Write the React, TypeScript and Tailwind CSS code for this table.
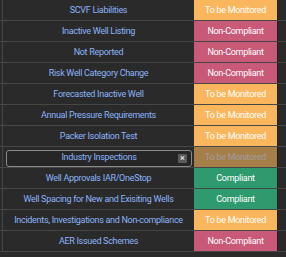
import React from "react";

type Status = "monitor" | "non" | "ok";

const rows: { name: string; status: Status; editing?: boolean }[] = [
    { name: "SCVF Liabilities", status: "monitor" },
    { name: "Inactive Well Listing", status: "non" },
    { name: "Not Reported", status: "non" },
    { name: "Risk Well Category Change", status: "non" },
    { name: "Forecasted Inactive Well", status: "monitor" },
    { name: "Annual Pressure Requirements", status: "monitor" },
    { name: "Packer Isolation Test", status: "monitor" },
    { name: "Industry Inspections", status: "monitor", editing: true },
    { name: "Well Approvals IAR/OneStop", status: "ok" },
    { name: "Well Spacing for New and Exisiting Wells", status: "ok" },
    { name: "Incidents, Investigations and Non-compliance", status: "monitor" },
    { name: "AER Issued Schemes", status: "non" },
];

const labels: Record<Status, string> = {
    monitor: "To be Monitored",
    non: "Non-Compliant",
    ok: "Compliant",
};

const colors: Record<Status, string> = {
    monitor: "bg-[#f9b65c]",
    non: "bg-[#c85a78]",
    ok: "bg-[#2e9a6e]",
};

export default function App() {
    return (
        <div className="w-[286px] h-[257px] overflow-hidden bg-[#2a2a2a] font-['Roboto',sans-serif] text-[9px] tracking-[-0.3px]">
            {rows.map((row) => (
                <div key={row.name} className="flex h-[21px] border-b border-[#464646]">
                    <div className="w-[2px]" />
                    <div className="w-[192px] border-l border-[#464646] flex items-center justify-center">
                        {row.editing ? (
                            <div className="ml-[3px] mr-[2px] w-full h-[17px] mt-[2px] rounded-[3px] border border-[#8a8a8a] bg-[#262626] flex items-center justify-center relative">
                                <span className="text-[#8ab4f8] whitespace-nowrap">{row.name}</span>
                                <span className="absolute right-[4px] top-[3px] w-[9px] h-[9px] bg-[#5a5a5a] rounded-[1px] flex items-center justify-center text-white text-[9px] leading-none tracking-normal">
                                    ×
                                </span>
                            </div>
                        ) : (
                            <span className="pt-px text-[#8ab4f8] whitespace-nowrap">{row.name}</span>
                        )}
                    </div>
                    <div
                        className={`w-[83px] pt-px flex items-center justify-center ${colors[row.status]} ${
                            row.editing ? "opacity-60 text-[#e8e8e8]" : "text-white"
                        }`}
                    >
                        {labels[row.status]}
                    </div>
                    <div className="flex-1 border-l border-[#1e1e1e]" />
                </div>
            ))}
        </div>
    );
}
